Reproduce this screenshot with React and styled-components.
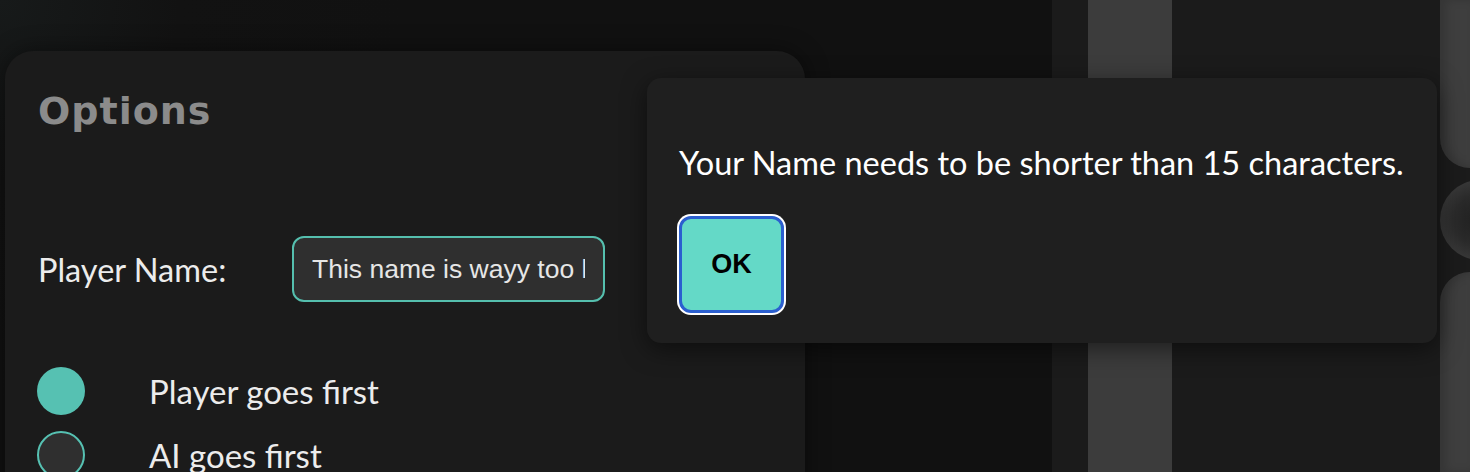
import React from "react";
import styled, { createGlobalStyle } from "styled-components";

const Global = createGlobalStyle`
  html, body { margin: 0; padding: 0; background: #111111; }
  body { width: 1470px; height: 472px; overflow: hidden; font-family: Lato, "Noto Sans", sans-serif; }
`;

const Page = styled.div`
  position: relative;
  width: 1470px;
  height: 472px;
  display: flex;
  background: radial-gradient(circle at 0 0, #171a1a 0, #121212 180px, #111111 400px);
  overflow: hidden;
`;

const LeftArea = styled.div`
  width: 1052px;
  padding: 51px 0 0 5px;
  box-sizing: border-box;
`;

const Card = styled.section`
  width: 800px;
  height: 480px;
  background: #1b1b1b;
  border-radius: 28px 28px 0 0;
  box-shadow: 0 0 24px rgba(0, 0, 0, 0.45);
  padding: 34px 33px 0;
  box-sizing: border-box;
  display: flex;
  flex-direction: column;
`;

const Title = styled.h1`
  margin: 0;
  font-family: "DejaVu Sans", sans-serif;
  font-weight: 700;
  font-size: 38px;
  letter-spacing: 1px;
  line-height: 52px;
  color: #8b8b8b;
`;

const FieldRow = styled.div`
  display: flex;
  align-items: center;
  margin-top: 99px;
`;

const Label = styled.label`
  font-family: Lato, sans-serif;
  font-size: 32.5px;
  color: #ececec;
  width: 254px;
`;

const NameInput = styled.input`
  width: 313px;
  height: 66px;
  box-sizing: border-box;
  border: 2px solid #55bfae;
  border-radius: 12px;
  background: #2f2f2f;
  color: #e6e6e6;
  font-family: "Liberation Sans", Arial, sans-serif;
  font-size: 26.5px;
  padding: 0 18px;
  margin: 0;
  outline: none;
`;

const RadioList = styled.div`
  display: flex;
  flex-direction: column;
  gap: 16px;
  margin-top: 65px;
`;

const RadioRow = styled.div`
  display: flex;
  align-items: center;
  height: 48px;
`;

const RadioDot = styled.span`
  width: 48px;
  height: 48px;
  border-radius: 50%;
  box-sizing: border-box;
  flex: none;
  background: ${(p) => (p.$checked ? "#56c1b2" : "#2f2f2f")};
  border: ${(p) => (p.$checked ? "none" : "2px solid #56c1b2")};
  margin-left: -1px;
`;

const RadioText = styled.span`
  font-family: Lato, sans-serif;
  font-size: 33px;
  color: #ececec;
  margin-left: 64px;
`;

const Gutter = styled.div`
  width: 36px;
  background: #1b1b1b;
`;

const Bar = styled.div`
  width: 84px;
  background: #3c3c3c;
`;

const SidePanel = styled.div`
  width: 268px;
  background: #1b1b1b;
`;

const Edge = styled.div`
  width: 30px;
  background: #1b1b1b;
  display: flex;
  flex-direction: column;
  gap: 12px;
`;

const EdgeBlock = styled.div`
  height: ${(p) => p.$h}px;
  background: #3e3e3e;
  border-radius: ${(p) => (p.$top ? "0 0 0 32px" : "32px 0 0 0")};
  box-shadow: inset 6px 0 10px rgba(0, 0, 0, 0.15);
  flex: none;
`;

const EdgeKnob = styled.div`
  width: 80px;
  height: 80px;
  border-radius: 50%;
  background: radial-gradient(circle at 50% 50%, #1e1e1e 0, #2a2a2a 45%, #464646 100%);
  flex: none;
`;

const Dialog = styled.div`
  position: absolute;
  left: 647px;
  top: 78px;
  width: 790px;
  height: 265px;
  box-sizing: border-box;
  background: #1f1f1f;
  border-radius: 14px;
  box-shadow: 0 6px 24px rgba(0, 0, 0, 0.5);
  padding: 65px 32px 0;
  display: flex;
  flex-direction: column;
  align-items: flex-start;
`;

const Message = styled.p`
  margin: 0;
  font-family: Lato, sans-serif;
  font-size: 32.5px;
  line-height: 40px;
  color: #ffffff;
`;

const OkButton = styled.button`
  margin-top: 33px;
  width: 105px;
  height: 97px;
  box-sizing: border-box;
  background: #64d9c7;
  border: 3px solid #2b5fcf;
  border-radius: 12px;
  box-shadow: 0 0 0 2px #ffffff;
  font-family: "Liberation Sans", Arial, sans-serif;
  font-weight: 700;
  font-size: 27px;
  color: #000;
  cursor: pointer;
`;

export default function App() {
  return (
    <>
      <Global />
      <Page>
        <LeftArea>
          <Card>
            <Title>Options</Title>
            <FieldRow>
              <Label>Player Name:</Label>
              <NameInput readOnly value="This name is wayy too long for the game" />
            </FieldRow>
            <RadioList>
              <RadioRow>
                <RadioDot $checked />
                <RadioText>Player goes first</RadioText>
              </RadioRow>
              <RadioRow>
                <RadioDot />
                <RadioText>AI goes first</RadioText>
              </RadioRow>
            </RadioList>
          </Card>
        </LeftArea>
        <Gutter />
        <Bar />
        <SidePanel />
        <Edge>
          <EdgeBlock $top $h={168} />
          <EdgeKnob />
          <EdgeBlock $h={200} />
        </Edge>
        <Dialog role="dialog">
          <Message>Your Name needs to be shorter than 15 characters.</Message>
          <OkButton>OK</OkButton>
        </Dialog>
      </Page>
    </>
  );
}
